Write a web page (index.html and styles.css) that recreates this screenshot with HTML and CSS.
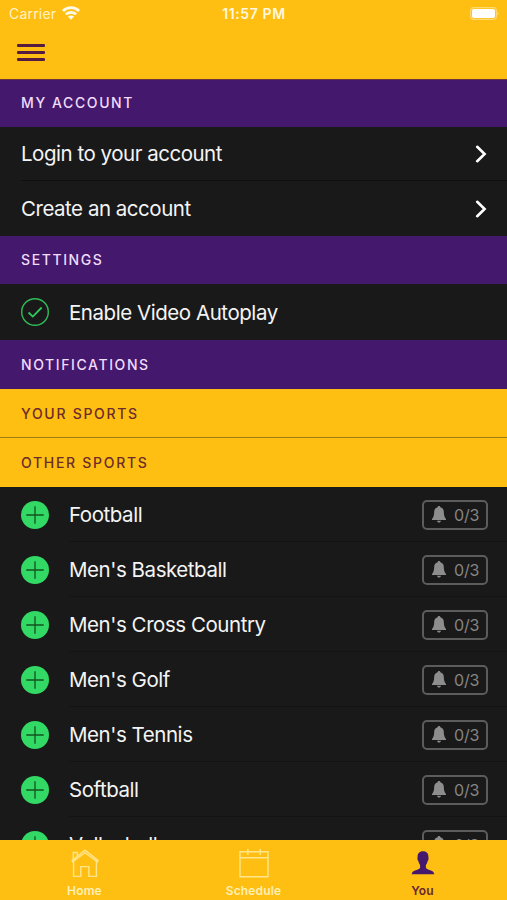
FILE: index.html
```html
<!DOCTYPE html>
<html lang="en">
<head>
<meta charset="utf-8">
<meta name="viewport" content="width=device-width, initial-scale=1">
<title>You</title>
<link rel="stylesheet" href="styles.css">
</head>
<body>
<svg class="sprite" width="0" height="0" aria-hidden="true">
  <symbol id="chevron" viewBox="0 0 12 18"><path d="M2.2 1.8 9.6 9 2.2 16.2" fill="none" stroke="#fff" stroke-width="2.6" stroke-linecap="round"/></symbol>
  <symbol id="plus" viewBox="0 0 28 28"><circle cx="14" cy="14" r="14" fill="#32d964"/><path d="M5.3 14H22.7M14 5.3V22.7" stroke="#14521f" stroke-width="1.3"/></symbol>
  <symbol id="bell" viewBox="0 0 14 17"><path d="M7 0C6.2 0 5.7.5 5.6 1.2 3.3 1.8 2.2 3.6 2.2 6 2.1 10 1.4 11.3 0 13V14H14V13C12.6 11.3 11.9 10 11.8 6 11.8 3.6 10.7 1.8 8.4 1.2 8.3.5 7.8 0 7 0ZM5 14.8C5.2 16 6 16.6 7 16.6S8.8 16 9 14.8Z" fill="#8d8d8d"/></symbol>
</svg>
<div class="screen">
  <header class="top">
    <div class="status">
      <div class="carrier"><span>Carrier</span>
        <svg width="18" height="14" viewBox="0 0 18 14"><g fill="none" stroke="#fffbe9" stroke-width="2.7"><path d="M.9 5C5.4.5 12.6.5 17.1 5"/><path d="M3.9 8.4C6.8 5.6 11.2 5.6 14.1 8.4"/></g><path d="M9 13.7 5.9 10.6C7.6 9.1 10.4 9.1 12.1 10.6Z" fill="#fffbe9"/></svg>
      </div>
      <div class="time">11:57 PM</div>
      <svg class="battery" width="29" height="14" viewBox="0 0 29 14"><rect x=".6" y=".6" width="25.8" height="11.8" rx="3.3" fill="none" stroke="#ffda70" stroke-width="1.2"/><rect x="2" y="2" width="23" height="9" rx="1.8" fill="#fff"/><path d="M27.4 4.5C28.8 5 28.8 8 27.4 8.5Z" fill="#ffda70"/></svg>
    </div>
    <div class="menu"><i></i><i></i><i></i></div>
  </header>
  <main class="list">
    <h2 class="section account"><span>MY ACCOUNT</span></h2>
    <div class="link"><span>Login to your account</span><svg width="12" height="18"><use href="#chevron"/></svg></div>
    <div class="link last"><span>Create an account</span><svg width="12" height="18"><use href="#chevron"/></svg></div>
    <h2 class="section settings"><span>SETTINGS</span></h2>
    <div class="row setting">
      <svg class="mark" width="28" height="28" viewBox="0 0 28 28"><circle cx="14" cy="14" r="13.3" fill="none" stroke="#2fbd58" stroke-width="1.4"/><path d="M7.5 14.5 11.8 18.6 20.7 9.5" fill="none" stroke="#2fca5c" stroke-width="1.8"/></svg>
      <span class="name">Enable Video Autoplay</span>
    </div>
    <h2 class="section"><span>NOTIFICATIONS</span></h2>
    <h2 class="section gold ruled"><span>YOUR SPORTS</span></h2>
    <h2 class="section gold"><span>OTHER SPORTS</span></h2>
    <div class="row"><svg class="mark" width="28" height="28"><use href="#plus"/></svg><span class="name">Football</span><span class="badge"><svg width="14" height="17"><use href="#bell"/></svg>0/3</span></div>
    <div class="row"><svg class="mark" width="28" height="28"><use href="#plus"/></svg><span class="name">Men's Basketball</span><span class="badge"><svg width="14" height="17"><use href="#bell"/></svg>0/3</span></div>
    <div class="row"><svg class="mark" width="28" height="28"><use href="#plus"/></svg><span class="name">Men's Cross Country</span><span class="badge"><svg width="14" height="17"><use href="#bell"/></svg>0/3</span></div>
    <div class="row"><svg class="mark" width="28" height="28"><use href="#plus"/></svg><span class="name">Men's Golf</span><span class="badge"><svg width="14" height="17"><use href="#bell"/></svg>0/3</span></div>
    <div class="row"><svg class="mark" width="28" height="28"><use href="#plus"/></svg><span class="name">Men's Tennis</span><span class="badge"><svg width="14" height="17"><use href="#bell"/></svg>0/3</span></div>
    <div class="row"><svg class="mark" width="28" height="28"><use href="#plus"/></svg><span class="name">Softball</span><span class="badge"><svg width="14" height="17"><use href="#bell"/></svg>0/3</span></div>
    <div class="row"><svg class="mark" width="28" height="28"><use href="#plus"/></svg><span class="name">Volleyball</span><span class="badge"><svg width="14" height="17"><use href="#bell"/></svg>0/3</span></div>
  </main>
  <nav class="tabs">
    <div class="tab"><svg width="30" height="30" viewBox="0 0 30 30" fill="none" stroke="#ffe68c" stroke-width="1.4"><path d="M2.6 12.8 2.2 11.4 15 1.2 28 11.4 27.4 12.8 15 3.8Z"/><path d="M3.3 10V3.5H7.2V7M3.6 12.5V27.4H10.8V17.6H18.9V27.4H26.4V12.5"/></svg><span>Home</span></div>
    <div class="tab"><svg width="30" height="30" viewBox="0 0 30 30" fill="none" stroke="#ffe68c" stroke-width="1.4"><path d="M1 2.7H29V27.8H1ZM1 8.8H29M8.8 0V6M21.2 0V6"/></svg><span>Schedule</span></div>
    <div class="tab active"><svg width="30" height="30" viewBox="0 0 30 30"><path d="M15 2.3C11.2 2.3 9.3 4.8 9.6 8.5 9.1 9 9.5 11.7 10.5 12.3 10.8 14 11.4 15.2 12.1 16V18.6C11.8 21.4 4 20.8 3.7 25.2H26.3C26 20.8 18.2 21.4 17.9 18.6V16C18.6 15.2 19.2 14 19.5 12.3 20.5 11.7 20.9 9 20.4 8.5 20.7 4.8 18.8 2.3 15 2.3Z" fill="#43186d"/></svg><span>You</span></div>
  </nav>
</div>
</body>
</html>
```
FILE: styles.css
```css
* { box-sizing: border-box; }
body { margin: 0; background: #191919; font-family: Inter, "Liberation Sans", sans-serif; }
svg { display: block; flex: none; }
.sprite { position: absolute; }
.screen { display: flex; flex-direction: column; height: 900px; overflow: hidden; }

.top { flex: none; height: 79px; background: #ffbe12; }
.status { display: grid; grid-template-columns: 1fr auto 1fr; height: 27px; padding: 0 8px 0 9px; align-items: center; color: #fff3c4; font-size: 14px; }
.carrier { display: flex; align-items: center; gap: 6px; letter-spacing: .2px; }
.carrier svg { margin-top: -2px; }
.time { font-weight: 600; color: #fff8df; letter-spacing: .6px; }
.battery { justify-self: end; }
.menu { display: flex; flex-direction: column; gap: 4.6px; padding: 17px 0 0 17px; }
.menu i { width: 28px; height: 2.5px; border-radius: 1px; background: #551b40; }

.list { flex: 1; min-height: 0; overflow: hidden; }
.section { display: flex; align-items: center; height: 49px; margin: 0; padding-left: 21px; background: #43186d; color: #f0dcfb; font-size: 14px; font-weight: 500; letter-spacing: 1.6px; white-space: nowrap; }
.account { height: 48px; padding-bottom: 2px; border-top: 1px solid #6d3440; }
.settings { height: 48px; padding-bottom: 1px; }
.gold { background: #ffbe12; color: #6b2c2b; letter-spacing: 1.7px; }
.ruled { border-bottom: 1px solid #a77b13; }

.link { display: flex; align-items: center; justify-content: space-between; height: 54px; margin-left: 21px; padding-right: 20px; border-bottom: 1px solid #101010; color: #f4f4f4; font-size: 20.5px; letter-spacing: -.48px; }
.last { height: 55px; border: 0; }
.row { display: flex; align-items: center; height: 55px; padding: 0 19px 0 21px; color: #f4f4f4; font-size: 20.5px; letter-spacing: -.45px; background: linear-gradient(#131313, #131313) 69px 100% / 100% 1px no-repeat; }
.setting { height: 56px; background: none; }
.name { margin-left: 20px; }
.badge { display: flex; align-items: center; gap: 8px; width: 66px; height: 30px; margin-left: auto; padding-left: 8px; border: 2px solid #5c5c5c; border-radius: 5px; color: #858585; font-size: 16px; letter-spacing: -.2px; }

.tabs { display: flex; flex: none; height: 60px; background: #ffbe12; }
.tab { flex: 1; display: flex; flex-direction: column; align-items: center; padding-top: 9px; color: #fff0b5; font-size: 12px; font-weight: 600; line-height: 16px; }
.tab span { margin-top: 4px; letter-spacing: .15px; }
.active { color: #652632; }
```
